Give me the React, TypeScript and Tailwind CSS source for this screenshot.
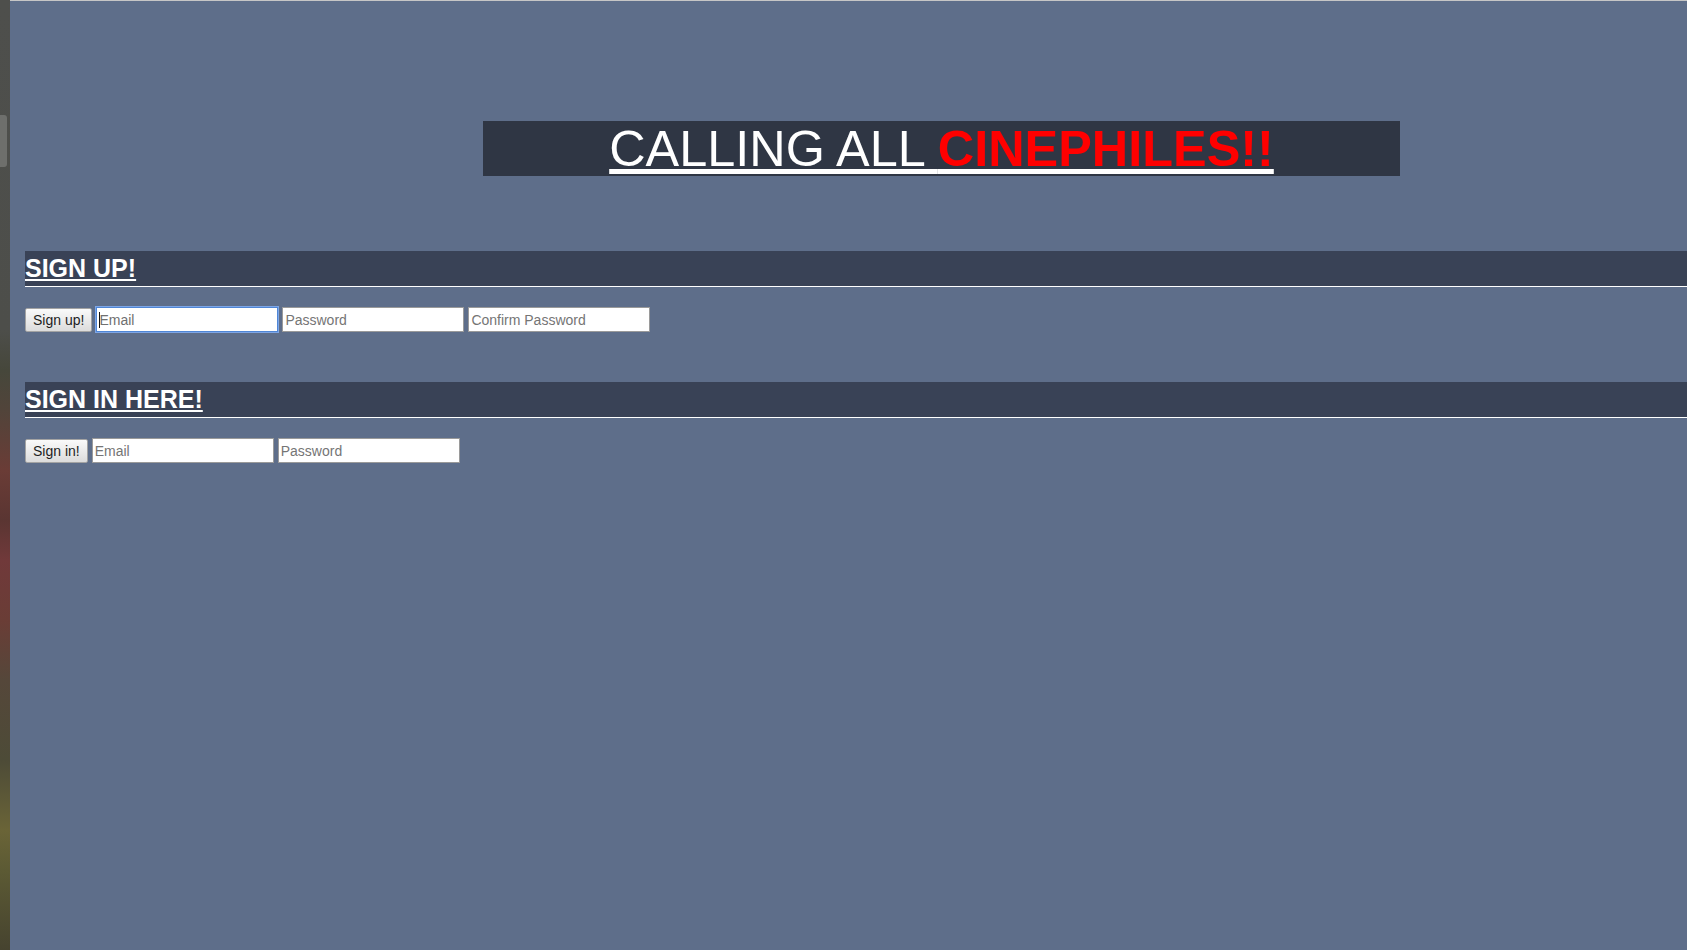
import React from "react";

const font = { fontFamily: '"Liberation Sans", Arial, sans-serif' };

function Btn({ label }: { label: string }) {
  return (
    <button
      type="button"
      className="h-[24px] px-[7px] text-[14px] leading-none text-[#1e1e1e] border border-[#a3a3a3] rounded-[2px] bg-[linear-gradient(to_bottom,#fafafa,#dcdcdc)]"
    >
      {label}
    </button>
  );
}

function Field({ placeholder, focused }: { placeholder: string; focused?: boolean }) {
  if (focused) {
    return (
      <span className="relative inline-flex">
        <input
          type="text"
          placeholder={placeholder}
          className="w-[182px] h-[25px] px-[2px] text-[14px] bg-white border border-[#4f86d6] shadow-[0_0_0_1px_#7ea6e6] outline-none placeholder:text-[#707070]"
        />
        <span className="absolute left-[3px] top-[5px] w-[1px] h-[16px] bg-[#111]" />
      </span>
    );
  }
  return (
    <input
      type="text"
      placeholder={placeholder}
      className="w-[182px] h-[25px] px-[2px] text-[14px] bg-white border border-[#9a9a9a] outline-none placeholder:text-[#757575]"
    />
  );
}

function SectionBar({ title }: { title: string }) {
  return (
    <div className="h-[36px] bg-[#394256] border-b border-white">
      <h2 className="text-[25px] leading-[35px] font-bold text-white underline">{title}</h2>
    </div>
  );
}

export default function App() {
  return (
    <div className="flex w-full h-[950px] overflow-hidden" style={font}>
      <div className="w-[10px] shrink-0 bg-[linear-gradient(to_bottom,#4e4f4c_0px,#4d4e4a_330px,#46473b_370px,#51443a_410px,#6a3c36_470px,#5a3532_520px,#70393a_560px,#6a3d36_620px,#55473a_680px,#4d4b37_760px,#6a6437_830px,#5c5a34_870px,#46432f_950px)]">
        <div className="mt-[115px] w-[7px] h-[52px] rounded-r-[3px] bg-[#6e6f6c]" />
      </div>
      <div className="flex-1 bg-[#5e6e8a] border-t border-[#c6c6c6] pl-[15px]">
        <div className="mt-[120px] ml-[458px] w-[917px] h-[55px] bg-[#2f3644] flex justify-center">
          <h1 className="text-[50.4px] leading-[55px] text-white underline whitespace-pre">
            {"CALLING ALL "}
            <span className="font-bold text-[#ff0000]">CINEPHILES!!</span>
          </h1>
        </div>

        <div className="mt-[75px]">
          <SectionBar title="SIGN UP!" />
        </div>
        <div className="mt-[20px] flex items-center gap-[4px]">
          <Btn label="Sign up!" />
          <Field placeholder="Email" focused />
          <Field placeholder="Password" />
          <Field placeholder="Confirm Password" />
        </div>

        <div className="mt-[50px]">
          <SectionBar title="SIGN IN HERE!" />
        </div>
        <div className="mt-[20px] flex items-center gap-[4px]">
          <Btn label="Sign in!" />
          <Field placeholder="Email" />
          <Field placeholder="Password" />
        </div>
      </div>
    </div>
  );
}
